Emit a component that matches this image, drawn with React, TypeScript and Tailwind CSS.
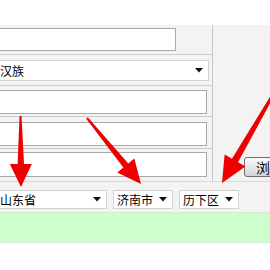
const FONT = 'font-["SimSun","Noto_Sans_CJK_SC",sans-serif]'

type Arrow = { x1: number; y1: number; x2: number; y2: number; w0: number; w1: number; hl: number; hw: number }

const arrows: Arrow[] = [
  { x1: 20.5, y1: 116, x2: 21, y2: 187, w0: 1, w1: 3.2, hl: 23, hw: 11 },
  { x1: 87, y1: 118, x2: 141, y2: 184, w0: 1, w1: 3.2, hl: 24, hw: 11 },
  { x1: 274, y1: 93, x2: 222, y2: 183, w0: 1.5, w1: 3.5, hl: 26, hw: 12 },
]

function arrowPoints(a: Arrow) {
  const dx = a.x2 - a.x1
  const dy = a.y2 - a.y1
  const len = Math.hypot(dx, dy)
  const ux = dx / len
  const uy = dy / len
  const px = -uy
  const py = ux
  const bx = a.x2 - ux * a.hl
  const by = a.y2 - uy * a.hl
  const pts = [
    [a.x1 + px * a.w0, a.y1 + py * a.w0],
    [bx + px * a.w1, by + py * a.w1],
    [bx + px * a.hw, by + py * a.hw],
    [a.x2, a.y2],
    [bx - px * a.hw, by - py * a.hw],
    [bx - px * a.w1, by - py * a.w1],
    [a.x1 - px * a.w0, a.y1 - py * a.w0],
  ]
  return pts.map(p => p.join(',')).join(' ')
}

function Caret() {
  return (
    <svg width="8" height="5" viewBox="0 0 8 5" className="shrink-0">
      <path d="M0 0H8L4 4.5Z" fill="#111" />
    </svg>
  )
}

function Select({ label, className }: { label: string; className: string }) {
  return (
    <div className={`flex items-center justify-between bg-white border border-[#d3d3d3] pl-[3px] pr-[5px] text-[12px] leading-none text-black ${className}`}>
      <span>{label}</span>
      <Caret />
    </div>
  )
}

function TextBox({ className }: { className: string }) {
  return <div className={`bg-white border border-[#a5a9ae] ${className}`} />
}

export default function App() {
  return (
    <div className={`w-[270px] h-[270px] overflow-hidden bg-white relative ${FONT}`}>
      <div className="h-[25px] bg-white" />
      <div className="bg-[#f3f3f3]">
        <div className="flex">
          <div className="w-[213px] shrink-0 border-r border-[#c9c9c9]">
            <div className="h-[30px] border-b border-[#cccccc] pt-[3px]">
              <TextBox className="-ml-[20px] w-[196px] h-[23px]" />
            </div>
            <div className="h-[31px] border-b border-[#cccccc] pt-[5px]">
              <Select label="汉族" className="-ml-[4px] w-[213px] h-[21px]" />
            </div>
            <div className="h-[31px] border-b border-[#cccccc] pt-[4px]">
              <TextBox className="-ml-[20px] w-[227px] h-[24px]" />
            </div>
            <div className="h-[32px] border-b border-[#cccccc] pt-[5px]">
              <TextBox className="-ml-[20px] w-[227px] h-[24px]" />
            </div>
            <div className="h-[32px] pt-[3px]">
              <TextBox className="-ml-[20px] w-[227px] h-[25px]" />
            </div>
          </div>
          <div className="flex-1 flex flex-col justify-end pb-[4px] pl-[31px]">
            <button className="h-[20px] w-[60px] whitespace-nowrap rounded-[3px] border border-[#6f6f6f] bg-gradient-to-b from-[#fbfbfb] to-[#d4d4d4] text-[14px] leading-none text-black text-left pl-[11px]">
              浏览...
            </button>
          </div>
        </div>
        <div className="h-[31px] border-t border-[#d9d9d9] flex items-start gap-[6px] pt-[8px]">
          <Select label="山东省" className="-ml-[4px] w-[111px] h-[19px]" />
          <Select label="济南市" className="w-[60px] h-[19px]" />
          <Select label="历下区" className="w-[60px] h-[19px]" />
        </div>
      </div>
      <div className="h-[31px] bg-[#ccffcc] border-t border-[#d6e9d6] border-b border-[#b9d4b9]" />
      <svg className="absolute inset-0 pointer-events-none" width="270" height="270" viewBox="0 0 270 270">
        {arrows.map((a, i) => (
          <polygon key={i} points={arrowPoints(a)} fill="#ee0000" />
        ))}
      </svg>
    </div>
  )
}
